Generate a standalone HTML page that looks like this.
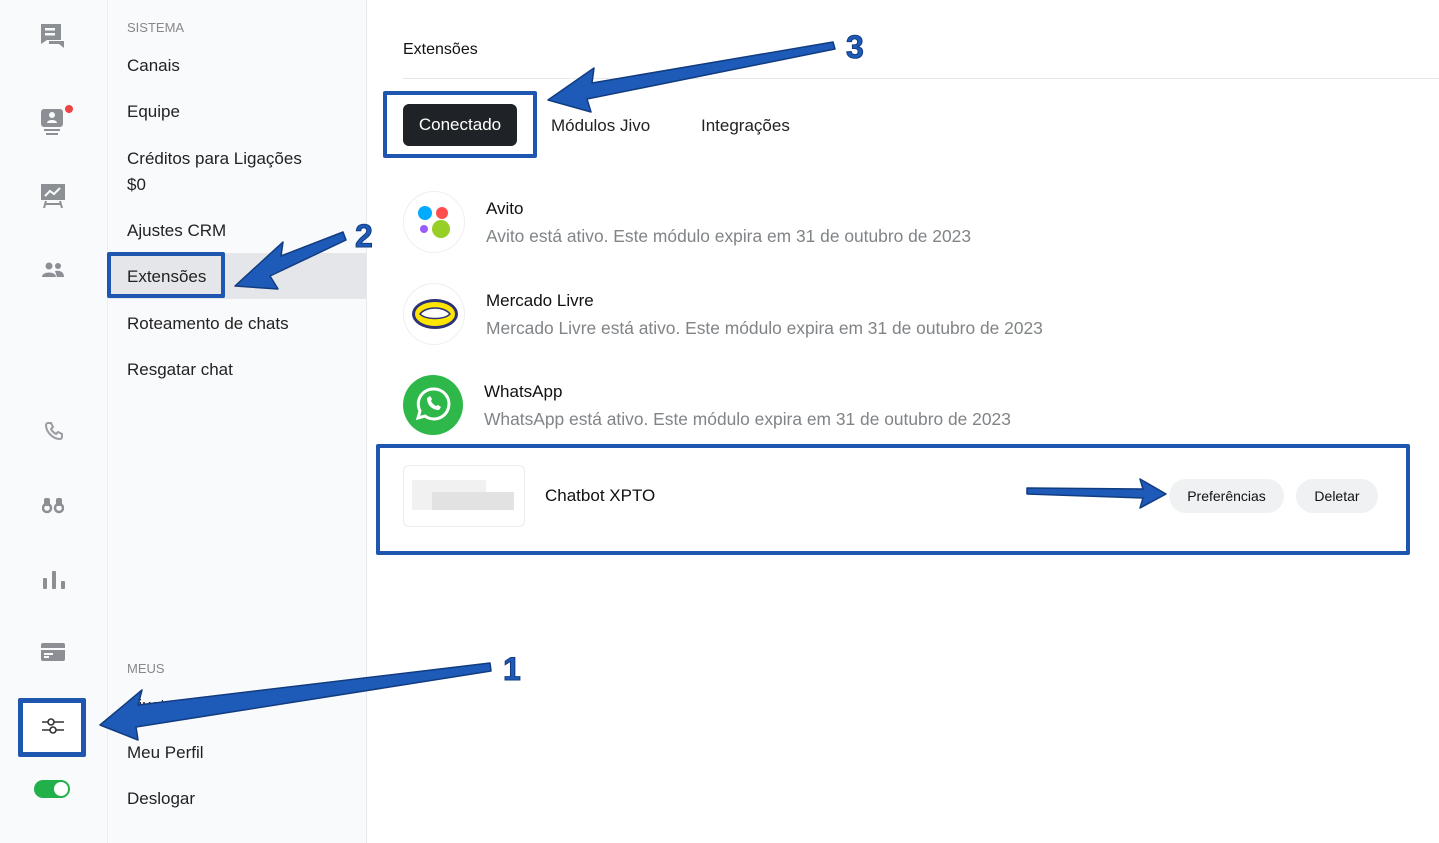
<!DOCTYPE html>
<html><head><meta charset="utf-8"><style>
*{margin:0;padding:0;box-sizing:border-box}
body{width:1439px;height:843px;overflow:hidden;background:#fff;font-family:"Liberation Sans",sans-serif;position:relative;color:#1a1a1a}
.iconbar{position:absolute;left:0;top:0;width:108px;height:843px;background:#f9fafb;border-right:1px solid #eceef0}
.menu{position:absolute;left:108px;top:0;width:259px;height:843px;background:#f9fafc;border-right:1px solid #e6e8eb}
.menu .it{position:absolute;left:19px;font-size:17px;color:#222}
.menu .hd{position:absolute;left:19px;font-size:13px;color:#888}
.ic{position:absolute}
.t{position:absolute;font-size:17px;color:#111}
.d{position:absolute;font-size:17.4px;color:#808487}
.logo{position:absolute;width:62px;height:62px;border-radius:50%;border:1px solid #eee;background:#fff}
.box{position:absolute;border:4px solid #1e56b0;border-radius:2px}
.btn{position:absolute;height:34px;border-radius:17px;background:#f0f1f2;font-size:14px;line-height:34px;text-align:center;color:#111}
</style></head><body>
<div class="iconbar">
<svg class="ic" style="left:38px;top:22px" width="30" height="30" viewBox="0 0 30 30"><path d="M3 2h20v16H9l-6 4z" fill="#8c8f93"/><path d="M26 8v18l-5-4H11v-3h15" fill="#8c8f93"/><rect x="7" y="6" width="10" height="2.5" fill="#f9fafb"/><rect x="7" y="11" width="10" height="2.5" fill="#f9fafb"/></svg>
<svg class="ic" style="left:40px;top:108px" width="26" height="28" viewBox="0 0 26 28"><rect x="1" y="1" width="22" height="18" rx="3" fill="#8c8f93"/><circle cx="12" cy="7" r="3" fill="#f9fafb"/><path d="M7 15c0-4 10-4 10 0z" fill="#f9fafb"/><rect x="4" y="21" width="16" height="2" fill="#8c8f93"/><rect x="6" y="25" width="12" height="2" fill="#8c8f93"/></svg>
<div style="position:absolute;left:65px;top:105px;width:8px;height:8px;border-radius:50%;background:#ef4444"></div>
<svg class="ic" style="left:40px;top:183px" width="26" height="26" viewBox="0 0 26 26"><rect x="1" y="1" width="24" height="16" fill="#8c8f93"/><path d="M5 13l5-5 4 3 6-6" stroke="#f9fafb" stroke-width="2" fill="none"/><path d="M6 18l-2 7M20 18l2 7M5 21h16" stroke="#8c8f93" stroke-width="2"/></svg>
<svg class="ic" style="left:41px;top:262px" width="24" height="16" viewBox="0 0 24 16"><circle cx="8" cy="4" r="3.5" fill="#8c8f93"/><circle cx="17" cy="4" r="3" fill="#8c8f93"/><path d="M1 15c0-6 14-6 14 0zM14 9c5-1 9 1 9 6h-7z" fill="#8c8f93"/></svg>
<svg class="ic" style="left:44px;top:421px" width="20" height="20" viewBox="0 0 20 20"><path d="M4 2l3 0 2 4-2 2c1 2 3 4 5 5l2-2 4 2v3c0 1-1 2-2 2C9 18 2 11 2 4c0-1 1-2 2-2z" fill="none" stroke="#9a9da1" stroke-width="2"/></svg>
<svg class="ic" style="left:42px;top:496px" width="22" height="18" viewBox="0 0 22 18"><circle cx="5" cy="12" r="4" fill="none" stroke="#8c8f93" stroke-width="2.5"/><circle cx="17" cy="12" r="4" fill="none" stroke="#8c8f93" stroke-width="2.5"/><rect x="2" y="2" width="6" height="8" rx="2" fill="#8c8f93"/><rect x="14" y="2" width="6" height="8" rx="2" fill="#8c8f93"/></svg>
<svg class="ic" style="left:43px;top:570px" width="22" height="20" viewBox="0 0 22 20"><rect x="0" y="8" width="4" height="11" rx="1" fill="#8c8f93"/><rect x="9" y="1" width="4" height="18" rx="1" fill="#8c8f93"/><rect x="18" y="11" width="4" height="8" rx="1" fill="#8c8f93"/></svg>
<svg class="ic" style="left:41px;top:643px" width="24" height="18" viewBox="0 0 24 18"><rect x="0" y="0" width="24" height="18" rx="2" fill="#8c8f93"/><rect x="0" y="5" width="24" height="2" fill="#f9fafb"/><rect x="3" y="10" width="9" height="2" fill="#f9fafb"/><rect x="3" y="13" width="5" height="2" fill="#f9fafb"/></svg>
<div class="box" style="left:18px;top:698px;width:68px;height:59px;border-width:5px;background:#fff"></div>
<svg class="ic" style="left:41px;top:716px" width="24" height="20" viewBox="0 0 24 20"><path d="M1 6h22M1 14h22" stroke="#333" stroke-width="1.6"/><circle cx="10" cy="6" r="3" fill="#fff" stroke="#333" stroke-width="1.6"/><circle cx="12" cy="14" r="3" fill="#fff" stroke="#333" stroke-width="1.6"/></svg>
<div style="position:absolute;left:34px;top:780px;width:36px;height:18px;border-radius:9px;background:#22b04b"></div>
<div style="position:absolute;left:54px;top:782px;width:14px;height:14px;border-radius:50%;background:#fff"></div>
</div>
<div class="menu">
<div class="hd" style="top:20px">SISTEMA</div>
<div class="it" style="top:56px">Canais</div>
<div class="it" style="top:102px">Equipe</div>
<div class="it" style="top:149px">Créditos para Ligações</div>
<div class="it" style="top:175px">$0</div>
<div class="it" style="top:221px">Ajustes CRM</div>
<div style="position:absolute;left:0;top:253px;width:258px;height:46px;background:#e4e6e9"></div>
<div class="box" style="left:-1px;top:252px;width:118px;height:46px;background:#e4e6e9"></div>
<div class="it" style="top:267px">Extensões</div>
<div class="it" style="top:314px">Roteamento de chats</div>
<div class="it" style="top:360px">Resgatar chat</div>
<div class="hd" style="top:661px">MEUS</div>
<div class="it" style="top:696px">Ajustes</div>
<div class="it" style="top:743px">Meu Perfil</div>
<div class="it" style="top:789px">Deslogar</div>
</div>

<div class="t" style="left:403px;top:41px;font-size:16px">Extensões</div>
<div style="position:absolute;left:403px;top:78px;width:1036px;height:1px;background:#e8e8e8"></div>
<div class="box" style="left:383px;top:91px;width:154px;height:67px"></div>
<div style="position:absolute;left:403px;top:104px;width:114px;height:42px;border-radius:6px;background:#1f2226;color:#fff;font-size:17px;line-height:42px;text-align:center">Conectado</div>
<div class="t" style="left:551px;top:116px;color:#222">Módulos Jivo</div>
<div class="t" style="left:701px;top:116px;color:#222">Integrações</div>

<div class="logo" style="left:403px;top:191px"></div>
<svg class="ic" style="left:415px;top:203px" width="40" height="40" viewBox="0 0 40 40"><circle cx="10" cy="10" r="7" fill="#00aaff"/><circle cx="27" cy="10" r="6" fill="#ff4e4e"/><circle cx="9" cy="26" r="4" fill="#9b5cff"/><circle cx="26" cy="26" r="9" fill="#97cf26"/></svg>
<div class="t" style="left:486px;top:199px">Avito</div>
<div class="d" style="left:486px;top:226px">Avito está ativo. Este módulo expira em 31 de outubro de 2023</div>

<div class="logo" style="left:403px;top:283px"></div>
<svg class="ic" style="left:410px;top:296px" width="50" height="36" viewBox="0 0 50 36"><ellipse cx="25" cy="18" rx="23" ry="15" fill="#2d3277"/><ellipse cx="25" cy="18" rx="20" ry="12" fill="#ffe600"/><path d="M10 18c6-8 24-8 30 0-6 6-24 6-30 0z" fill="#fff" stroke="#2d3277" stroke-width="1.5"/></svg>
<div class="t" style="left:486px;top:291px">Mercado Livre</div>
<div class="d" style="left:486px;top:318px">Mercado Livre está ativo. Este módulo expira em 31 de outubro de 2023</div>

<div style="position:absolute;left:403px;top:375px;width:60px;height:60px;border-radius:50%;background:#2fb84a"></div>
<svg class="ic" style="left:415px;top:386px" width="36" height="38" viewBox="0 0 36 38"><path d="M18 3a15 15 0 1 1-8 27l-7 2 2-7A15 15 0 0 1 18 3z" fill="none" stroke="#fff" stroke-width="3"/><path d="M12 12c0 7 5 12 12 12l2-3-3-2-2 1c-2-1-4-3-5-5l1-2-2-3z" fill="#fff"/></svg>
<div class="t" style="left:484px;top:382px">WhatsApp</div>
<div class="d" style="left:484px;top:409px">WhatsApp está ativo. Este módulo expira em 31 de outubro de 2023</div>

<div class="box" style="left:376px;top:444px;width:1034px;height:111px"></div>
<div style="position:absolute;left:403px;top:465px;width:122px;height:62px;border:1px solid #ececec;border-radius:6px;background:#fff"></div>
<div style="position:absolute;left:412px;top:480px;width:74px;height:30px;background:#f1f1f1"></div>
<div style="position:absolute;left:432px;top:492px;width:82px;height:18px;background:#e2e2e2"></div>
<div class="t" style="left:545px;top:486px">Chatbot XPTO</div>
<div class="btn" style="left:1169px;top:479px;width:115px">Preferências</div>
<div class="btn" style="left:1296px;top:479px;width:82px">Deletar</div>

<svg style="position:absolute;left:0;top:0" width="1439" height="843" viewBox="0 0 1439 843">
<g fill="#1e5bb8" stroke="#123c80" stroke-width="1.5" stroke-linejoin="round">
<path d="M490 663L138 705 142 690 100 725 138 740 136 727 491 671z"/>
<path d="M343 232L281 256 283 242 235 286 278 289 270 276 346 240z"/>
<path d="M833 42L592 83 594 68 548 100 591 112 587 99 835 49z"/>
<path d="M1027 488L1143 489 1140 479 1166 494 1140 508 1143 498 1027 494z"/>
</g>
<g font-family="Liberation Sans,sans-serif" font-weight="bold" font-size="32" fill="#1e5bb8" stroke="#123c80" stroke-width="1">
<text x="503" y="680">1</text><text x="355" y="247">2</text><text x="846" y="58">3</text>
</g>
</svg>
</body></html>
